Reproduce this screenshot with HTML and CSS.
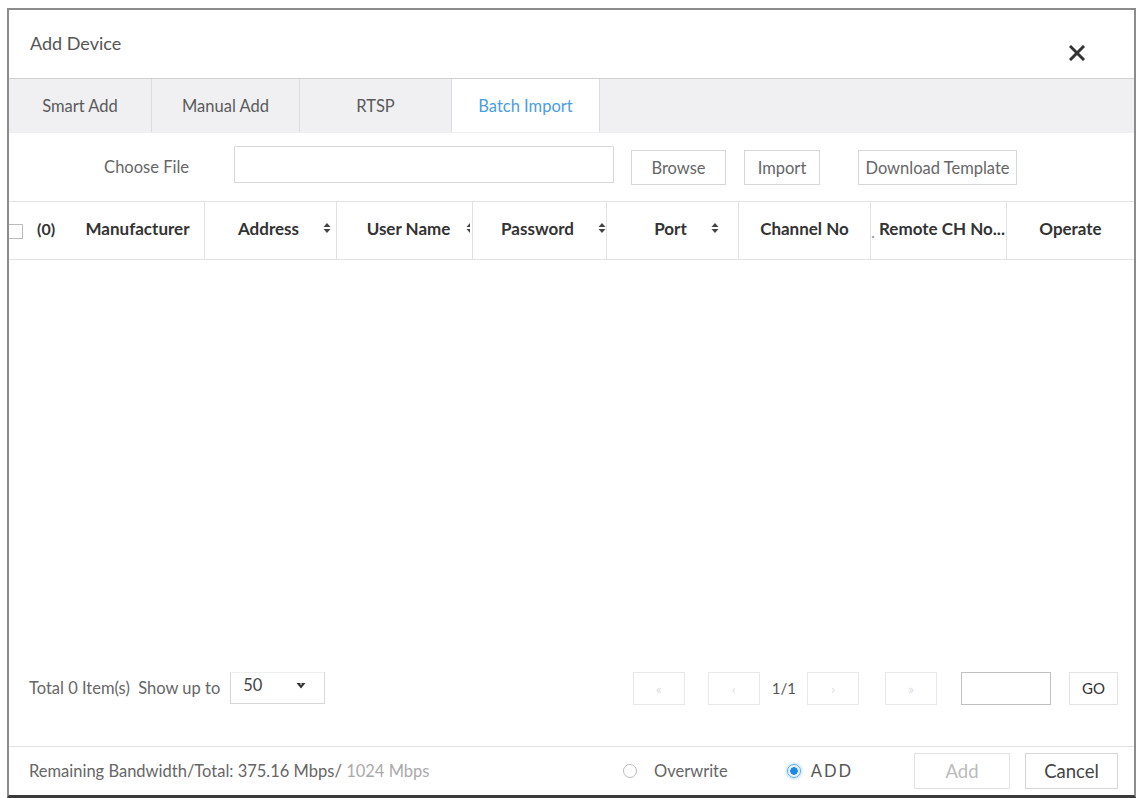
FILE: index.html
```html
<!DOCTYPE html>
<html>
<head>
<meta charset="utf-8">
<link rel="stylesheet" href="styles.css">
</head>
<body>
<div class="dialog">
  <div class="dlg-head">
    <span class="dlg-title">Add Device</span>
    <svg class="close" width="16" height="16" viewBox="0 0 16 16"><path d="M2 2 L14 14 M14 2 L2 14" stroke="#333" stroke-width="3" stroke-linecap="square"/></svg>
  </div>
  <div class="tabs">
    <div class="tab t1">Smart Add</div>
    <div class="tab t2">Manual Add</div>
    <div class="tab t3">RTSP</div>
    <div class="tab t4 active">Batch Import</div>
  </div>
  <div class="file-row">
    <label class="file-label">Choose File</label>
    <div class="file-input"></div>
    <button class="btn b-browse">Browse</button>
    <button class="btn b-import">Import</button>
    <button class="btn b-tpl">Download Template</button>
  </div>
  <div class="thead">
    <div class="th th-check"><span class="cbox"></span><span class="cnt">(0)</span></div>
    <div class="th sep">Manufacturer</div>
    <div class="th sep sortable"><span class="lbl">Address</span><svg class="sort" width="8" height="12" viewBox="0 0 8 12"><path d="M4 1 L7.5 5 H0.5 Z M4 11 L7.5 7 H0.5 Z" fill="#444"/></svg></div>
    <div class="th sep sortable"><span class="lbl">User Name</span><svg class="sort half" width="4" height="12" viewBox="0 0 4 12"><path d="M4 1 L0.5 5 H4 Z M4 11 L0.5 7 H4 Z" fill="#444"/></svg></div>
    <div class="th sep sortable"><span class="lbl">Password</span><svg class="sort" width="8" height="12" viewBox="0 0 8 12"><path d="M4 1 L7.5 5 H0.5 Z M4 11 L7.5 7 H0.5 Z" fill="#444"/></svg></div>
    <div class="th sep sortable"><span class="lbl">Port</span><svg class="sort" width="8" height="12" viewBox="0 0 8 12"><path d="M4 1 L7.5 5 H0.5 Z M4 11 L7.5 7 H0.5 Z" fill="#444"/></svg></div>
    <div class="th sep">Channel No</div>
    <div class="th sep th-remote"><span class="tick">.</span>Remote CH No...</div>
    <div class="th">Operate</div>
  </div>
  <div class="tbody"></div>
  <div class="pager">
    <span class="total">Total 0 Item(s)&nbsp; Show up to</span>
    <div class="select"><span>50</span><svg width="10" height="7" viewBox="0 0 10 7"><path d="M0.5 1 L9.5 1 L5 6.5 Z" fill="#333"/><path d="M5 1 L5 3" stroke="#fff" stroke-width="1"/></svg></div>
    <div class="spacer"></div>
    <div class="pbtn p1">«</div>
    <div class="pbtn p2">‹</div>
    <span class="pageno">1/1</span>
    <div class="pbtn p3">›</div>
    <div class="pbtn p4">»</div>
    <div class="page-input"></div>
    <div class="gobtn">GO</div>
  </div>
  <div class="dlg-foot">
    <span class="bw">Remaining Bandwidth/Total: 375.16 Mbps/ <span class="bw-total">1024 Mbps</span></span>
    <div class="spacer"></div>
    <span class="radio"></span><span class="rlabel r-over">Overwrite</span>
    <span class="radio checked"></span><span class="rlabel r-add">ADD</span>
    <div class="fbtn disabled">Add</div>
    <div class="fbtn cancel">Cancel</div>
  </div>
</div>
</body>
</html>
```

FILE: styles.css
```css
* { box-sizing: border-box; }
html, body { margin: 0; padding: 0; background: #fff; }
body { font-family: Lato, "Open Sans", "Liberation Sans", sans-serif; color: #666; }

.dialog {
  margin: 8px 0 0 7px;
  width: 1129px;
  height: 790px;
  border: 2px solid #8c8c8c;
  border-bottom: 3px solid #3a3a3a;
  display: flex;
  flex-direction: column;
  overflow: hidden;
}

.dlg-head {
  height: 69px;
  flex: none;
  display: flex;
  align-items: flex-start;
  padding: 22px 0 0 21px;
  border-bottom: 1px solid #cfcfcf;
}
.dlg-title { font-size: 18px; color: #555; line-height: 22px; }
.close { margin-left: auto; margin-right: 49px; margin-top: 13px; }

.tabs {
  height: 54px;
  flex: none;
  display: flex;
  background: #f0f0f3;
  border-bottom: 1px solid #f0f0f3;
}
.tab {
  display: flex;
  align-items: center;
  justify-content: center;
  font-size: 16.5px;
  color: #5a5a5a;
  border-right: 1px solid #dcdce0;
}
.t1 { width: 143px; }
.t2 { width: 148px; }
.t3 { width: 152px; }
.t4 { width: 148px; }
.tab.active { background: #fff; color: #4a9de0; }

.file-row {
  height: 69px;
  flex: none;
  display: flex;
  align-items: flex-start;
  padding-top: 13px;
  border-bottom: 1px solid #e2e2e2;
}
.file-label {
  width: 225px;
  text-align: right;
  padding-right: 45px;
  font-size: 16.5px;
  color: #666;
  line-height: 42px;
}
.file-input {
  width: 380px;
  height: 37px;
  border: 1px solid #d8d8d8;
}
.btn {
  height: 35px;
  margin-top: 4px;
  border: 1px solid #d6d6d6;
  background: #fff;
  font-family: inherit;
  font-size: 16.5px;
  color: #666;
  padding: 0;
}
.b-browse { width: 95px; margin-left: 17px; }
.b-import { width: 76px; margin-left: 18px; }
.b-tpl { width: 159px; margin-left: 38px; white-space: nowrap; }

.thead {
  height: 58px;
  flex: none;
  display: grid;
  grid-template-columns: 62px 134px 132px 136px 134px 132px 132px 136px 1fr;
  border-bottom: 1px solid #e2e2e2;
}
.th {
  display: flex;
  align-items: center;
  justify-content: center;
  font-size: 17px;
  font-weight: bold;
  color: #333;
  white-space: nowrap;
  overflow: hidden;
  padding-bottom: 5px;
}
.th.sep { border-right: 1px solid #e2e2e2; }
.th.sortable { padding-left: 28px; }
.sort { margin-left: 24px; flex: none; }
.sort.half { margin-left: 16px; }
.th-check { justify-content: flex-start; }
.cbox {
  width: 15px;
  height: 15px;
  border: 1px solid #bbb;
  margin-left: -1px;
  flex: none;
  margin-top: 6px;
}
.cnt { margin-left: 14px; font-size: 16px; }
.th-remote { justify-content: flex-start; padding-left: 0; }
.tick { color: #999; width: 8px; font-weight: normal; margin-top: 6px; }

.tbody { flex: 1; }

.pager {
  flex: none;
  height: 34px;
  margin-bottom: 41px;
  display: flex;
  align-items: center;
  padding: 0 16px 0 20px;
}
.total { font-size: 16.5px; color: #666; }
.select {
  width: 95px;
  height: 32px;
  margin-left: 10px;
  border: 1px solid #d6d6d6;
  border-top-color: #eee;
  display: flex;
  align-items: center;
  justify-content: space-between;
  padding: 0 18px 6px 12px;
  font-size: 16.5px;
  color: #444;
}
.spacer { flex: 1; }
.pbtn {
  width: 52px;
  height: 33px;
  border: 1px solid #e8e8e8;
  display: flex;
  align-items: center;
  justify-content: center;
  font-size: 14px;
  color: #ddd;
}
.p2 { margin-left: 23px; }
.pageno { font-size: 15px; color: #555; margin-left: 12px; margin-right: 11px; }
.p4 { margin-left: 26px; }
.page-input {
  width: 90px;
  height: 33px;
  margin-left: 24px;
  border: 1px solid #c0c0c0;
}
.gobtn {
  width: 49px;
  height: 33px;
  margin-left: 18px;
  border: 1px solid #e3e3e3;
  display: flex;
  align-items: center;
  justify-content: center;
  font-size: 15px;
  color: #333;
}

.dlg-foot {
  flex: none;
  height: 49px;
  border-top: 1px solid #e2e2e2;
  display: flex;
  align-items: center;
  padding: 0 16px 0 20px;
}
.bw { font-size: 16.5px; color: #666; }
.bw-total { color: #aaa; }
.radio {
  width: 14px;
  height: 14px;
  border-radius: 50%;
  border: 1px solid #bbb;
  flex: none;
}
.radio.checked {
  border: 1px solid #5aaae8;
  background: radial-gradient(circle, #1e88e5 0 3.5px, #e8f3fc 4px);
  box-shadow: 0 0 3px 1px #bcdcf6;
}
.rlabel { font-size: 16.5px; color: #666; }
.r-over { margin-left: 17px; margin-right: 59px; }
.r-add { margin-left: 10px; color: #555; letter-spacing: 2px; margin-right: -2px; }
.fbtn {
  height: 36px;
  border: 1px solid #d6d6d6;
  display: flex;
  align-items: center;
  justify-content: center;
  font-size: 18.5px;
}
.fbtn.disabled { width: 96px; margin-left: 63px; color: #bbb; border-color: #e2e2e2; }
.fbtn.cancel { width: 93px; margin-left: 15px; color: #444; }
```
